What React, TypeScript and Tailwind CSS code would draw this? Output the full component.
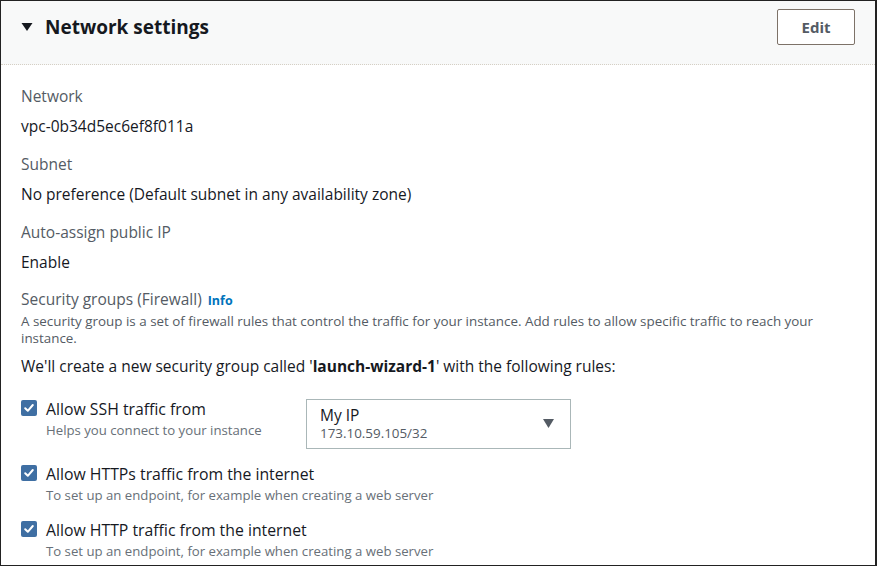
import React from "react";

const font = { fontFamily: '"Open Sans", "Noto Sans", Arial, sans-serif' };

function Check() {
  return (
    <span className="mt-[1px] flex h-[16px] w-[16px] shrink-0 items-center justify-center rounded-[2px] bg-[#3f6fa3]">
      <svg width="12" height="12" viewBox="0 0 12 12" fill="none">
        <path d="M2.2 6.2 L4.8 8.8 L9.8 3" stroke="white" strokeWidth="2" strokeLinecap="round" strokeLinejoin="round" />
      </svg>
    </span>
  );
}

function Field({ label, value, first }: { label: string; value: string; first?: boolean }) {
  return (
    <div className={first ? "flex flex-col gap-[10px]" : "mt-[18px] flex flex-col gap-[10px]"}>
      <div className="text-[15.5px] leading-[20px] text-[#545b64]">{label}</div>
      <div className="text-[15.5px] leading-[20px] text-[#16191f]">{value}</div>
    </div>
  );
}

function Rule({ title, hint, className, children }: { title: string; hint: string; className?: string; children?: React.ReactNode }) {
  return (
    <div className={"flex items-start " + (className ?? "")}>
      <div className="flex w-[285px] shrink-0 gap-[9px]">
        <Check />
        <div className="flex flex-col">
          <div className="whitespace-nowrap text-[15.8px] leading-[20px] text-[#16191f]">{title}</div>
          <div className="mt-[2px] whitespace-nowrap text-[13.2px] leading-[18px] text-[#687078]">{hint}</div>
        </div>
      </div>
      {children}
    </div>
  );
}

export default function App() {
  return (
    <div style={font} className="h-[566px] w-[877px] overflow-hidden border-t border-l border-r-2 border-b border-[#222] bg-white">
      {/* header */}
      <div className="flex h-[64px] items-start justify-between border-b border-dotted border-[#d5cfc4] bg-[#f8f9f9] pl-[20px] pr-[20px] pt-[8px]">
        <div className="flex h-[36px] items-center gap-[12px]">
          <svg width="12" height="10" viewBox="0 0 12 10">
            <path d="M0.5 1 H11.5 L6 9 Z" fill="#16191f" />
          </svg>
          <h2 className="text-[19px] font-bold text-[#16191f]">Network settings</h2>
        </div>
        <button className="h-[36px] w-[78px] rounded-[2px] border border-[#7d7268] bg-white text-[15px] font-bold text-[#545b64]">
          Edit
        </button>
      </div>

      {/* body */}
      <div className="flex flex-col pl-[20px] pr-[20px] pt-[21px]">
        <Field first label="Network" value="vpc-0b34d5ec6ef8f011a" />
        <Field label="Subnet" value="No preference (Default subnet in any availability zone)" />
        <Field label="Auto-assign public IP" value="Enable" />

        <div className="mt-[17px] flex items-baseline gap-[6px]">
          <span className="text-[15.5px] leading-[20px] text-[#545b64]">Security groups (Firewall)</span>
          <span className="text-[12.5px] font-bold text-[#0073bb]">Info</span>
        </div>
        <p className="mt-[2px] text-[13.4px] leading-[17px] text-[#545b64]">
          A security group is a set of firewall rules that control the traffic for your instance. Add rules to allow specific traffic to reach your instance.
        </p>
        <p className="mt-[9px] text-[15.5px] leading-[20px] text-[#16191f]">
          We'll create a new security group called '<span className="font-bold">launch-wizard-1</span>' with the following rules:
        </p>

        <Rule className="mt-[23px]" title="Allow SSH traffic from" hint="Helps you connect to your instance">
          <div className="flex h-[50px] w-[265px] items-center justify-between border border-[#aab7b8] pl-[13px] pr-[16px]">
            <div className="flex flex-col">
              <span className="text-[15.5px] leading-[18px] text-[#16191f]">My IP</span>
              <span className="mt-[1px] text-[13.4px] leading-[17px] text-[#545b64]">173.10.59.105/32</span>
            </div>
            <svg width="11" height="9" viewBox="0 0 11 9">
              <path d="M0 0 H11 L5.5 9 Z" fill="#545b64" />
            </svg>
          </div>
        </Rule>
        <Rule className="mt-[15px]" title="Allow HTTPs traffic from the internet" hint="To set up an endpoint, for example when creating a web server" />
        <Rule className="mt-[16px]" title="Allow HTTP traffic from the internet" hint="To set up an endpoint, for example when creating a web server" />
      </div>
    </div>
  );
}
